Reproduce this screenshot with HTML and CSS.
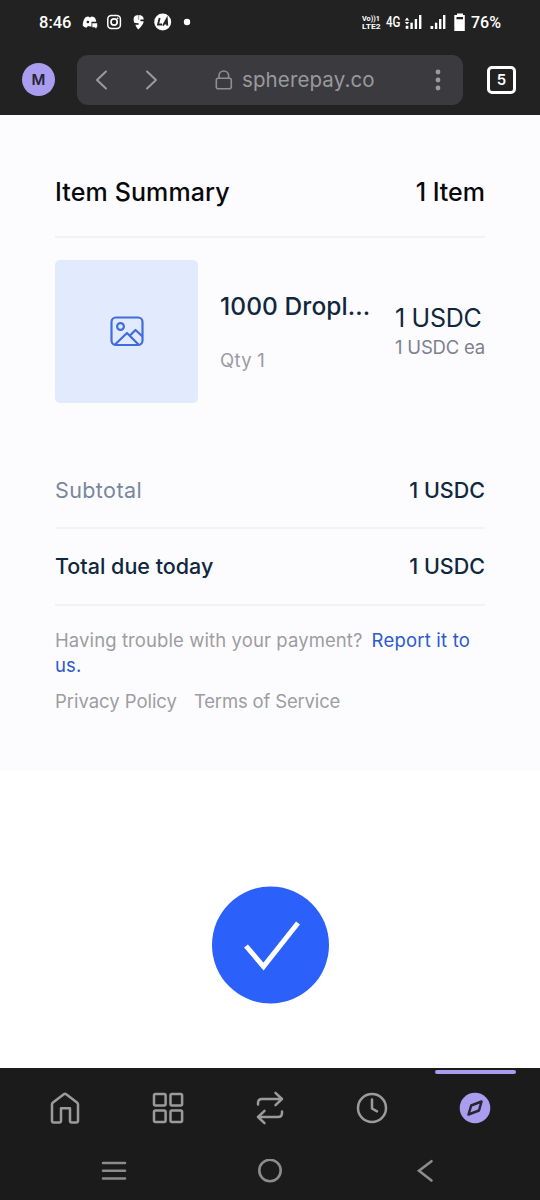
FILE: index.html
```html
<!DOCTYPE html>
<html lang="en">
<head>
<meta charset="utf-8">
<title>Item Summary</title>
<link rel="stylesheet" href="styles.css">
</head>
<body>
<header class="chrome">
  <div class="status">
    <span class="time">8:46</span>
    <svg class="notices" width="112" height="20" viewBox="82 12 112 20">
      <path fill="#fff" d="M85.500 17.200q2-1 3-.7l.6.7h1.600l.6-.7q2 0 3.300 1 1.300 1.500 1.700 4.300H91.500v4.800h-1.800l-.4-.6-1.600.2-1.300 1.500q-2.300-.500-3.700-2.200.300-5.800 2.800-8.300z"/>
      <circle cx="87.900" cy="22" r="1.300" fill="#222"/>
      <path fill="#fff" d="M92.300 23.300h4.900v3.900h-.9v1.600l-1.700-1.600h-2.300z"/>
      <rect x="107.800" y="15.600" width="12.600" height="12.800" rx="3.500" fill="none" stroke="#fff" stroke-width="1.500"/>
      <circle cx="114.100" cy="22" r="3.100" fill="none" stroke="#fff" stroke-width="1.700"/><circle cx="117.600" cy="18.300" r=".9" fill="#fff"/>
      <path fill="#fff" d="M138.300 29.600q-1.600-1.600-3-4.800h3.300v-1.600q-3.600 0-4.600-.8-2.200-7.200 4.500-7.500 5.200.2 5.200 4.500h-3.300v1.800h3.200q.2 3-5.300 8.400z"/><path d="M138.700 15v4.700" stroke="#222" fill="none" stroke-width=".5"/>
      <circle cx="162.700" cy="22" r="8.500" fill="#fff"/>
      <path fill="none" stroke="#222" stroke-width="1.800" d="M159.700 18l-1.700 6.500h4M163 25.600l3.800-6.800.5 6.800M164.500 23.500h2.500"/>
      <circle cx="187" cy="22" r="3.200" fill="#fff"/>
    </svg>
    <svg class="radio" width="106" height="24" viewBox="361 10 106 24">
      <g class="tiny"><text x="362" y="20.700" textLength="18" lengthAdjust="spacingAndGlyphs">Vo))1</text><text x="362" y="28.900" textLength="18.500" lengthAdjust="spacingAndGlyphs">LTE2</text></g>
      <text class="network" x="386" y="27" textLength="14.500" lengthAdjust="spacingAndGlyphs">4G</text>
      <g fill="#fff"><path d="M404.800 20.500l2.200-3 2.200 3zM404.800 22h4.400L407 24.500z"/><rect x="405.700" y="25.800" width="2.700" height="3"/><rect x="410.400" y="22.700" width="2.400" height="6.300"/><rect x="414.700" y="19" width="2.400" height="10"/><rect x="419" y="15" width="2.400" height="14"/>
      <rect x="430.500" y="26" width="2.700" height="3"/><rect x="434.900" y="22.700" width="2.400" height="6.300"/><rect x="439" y="19" width="2.400" height="10"/><rect x="443" y="15" width="2.400" height="14"/>
      <path d="M457 13.500h6V15h1.800v16H454.300V15H457z"/></g><rect x="456.500" y="17" width="6.500" height="2.300" fill="#222"/>
    </svg>
    <span class="battery">76%</span>
  </div>
  <div class="toolbar">
    <div class="avatar">M</div>
    <div class="address">
      <svg width="74" height="24" viewBox="90 68 74 24" fill="none" stroke="#9b9b9d" stroke-width="2" stroke-linecap="round" stroke-linejoin="round"><path d="M106 71.500L97 80l9 8.500M147 71.500l9 8.500-9 8.500"/></svg>
      <div class="site"><svg width="18" height="20" viewBox="0 0 18 20" fill="none" stroke="#8f8f92" stroke-width="1.600"><rect x="1.300" y="8.300" width="15" height="10.500" rx="2"/><path d="M4 8V5.800a4.800 4.800 0 0 1 9.600 0V8"/></svg><span>spherepay.co</span></div>
      <svg class="more" width="6" height="22" viewBox="0 0 6 22" fill="#9b9b9d"><circle cx="3" cy="3" r="2.400"/><circle cx="3" cy="11" r="2.400"/><circle cx="3" cy="19" r="2.400"/></svg>
    </div>
    <div class="tabs">5</div>
  </div>
</header>
<main>
  <section class="summary">
    <div class="heading"><h1>Item Summary</h1><span class="count">1 Item</span></div>
    <div class="product">
      <div class="thumb"><svg width="34" height="32" viewBox="0 0 34 32" fill="none" stroke="#416cdf" stroke-width="2.200" stroke-linejoin="round"><rect x="1.500" y="1.500" width="31" height="27.500" rx="4.500"/><circle cx="10.500" cy="10.500" r="3.400"/><path d="M5 28.500l12-11.500 11.500 11.500M20 19.500l5.500-5.500 7 6.500"/></svg></div>
      <div class="details"><div class="name">1000 Dropl...</div><div class="qty">Qty 1</div></div>
      <div class="price"><div class="amount">1 USDC</div><div class="each">1 USDC ea</div></div>
    </div>
    <div class="row subtotal"><span class="label">Subtotal</span><span class="value">1 USDC</span></div>
    <div class="row total"><span class="label">Total due today</span><span class="value">1 USDC</span></div>
    <p class="help"><span class="question">Having trouble with your payment?</span><a class="report">Report it to</a><br><a class="us">us.</a></p>
    <div class="legal"><a class="privacy">Privacy Policy</a><a class="terms">Terms of Service</a></div>
  </section>
  <section class="success"><svg width="118" height="118" viewBox="0 0 118 118"><circle cx="59.500" cy="59" r="58.500" fill="#2b61fa"/><path d="M35 60L52.500 80.500 87 37" fill="none" stroke="#fff" stroke-width="5"/></svg></section>
</main>
<footer>
  <nav class="tabbar">
    <a><svg width="32" height="34" viewBox="0 0 32 34"><path d="M4.800 31.500Q3 31.500 3 29.700V13.500q0-1.200 1-2L14.800 3.300q1.200-.9 2.400 0L28 11.500q1 .8 1 2v16.200q0 1.800-1.800 1.800h-4.400q-1.800 0-1.800-1.800V17.200h-9v12.500q0 1.800-1.800 1.800z"/></svg></a>
    <a><svg width="32" height="34" viewBox="0 0 32 34"><rect x="2" y="3" width="11.600" height="11.600" rx="1.500"/><rect x="18.500" y="3" width="11.600" height="11.600" rx="1.500"/><rect x="2" y="19.500" width="11.600" height="11.600" rx="1.500"/><rect x="18.500" y="19.500" width="11.600" height="11.600" rx="1.500"/></svg></a>
    <a><svg width="32" height="34" viewBox="0 0 32 34"><path d="M4 13.500V12q0-4 4-4h20M21.500 1.800L28 8l-6.500 6.200M28 20.500V22q0 4-4 4H4M10.500 19.800L4 26l6.500 6.200"/></svg></a>
    <a><svg width="32" height="34" viewBox="0 0 32 34"><circle cx="16" cy="17" r="14"/><path d="M16 8.500v9l5 2.800"/></svg></a>
    <a class="current"><svg width="32" height="34" viewBox="0 0 32 34"><circle class="disc" cx="16" cy="17" r="15.300"/><path class="needle" d="M22.500 10.500l-2.500 9-10.500 4 2.700-9z"/></svg></a>
  </nav>
  <div class="system">
    <svg width="26" height="24" viewBox="0 0 26 24"><path d="M2 4h22M2 11.800h22M2 19.500h22"/></svg>
    <svg width="26" height="24" viewBox="0 0 26 24"><circle cx="13" cy="11.500" r="10.700"/></svg>
    <svg width="26" height="24" viewBox="0 0 26 24"><path d="M18.500 2.200L6 11.800l12.500 9.700"/></svg>
  </div>
</footer>
</body>
</html>
```

FILE: styles.css
```css
* { box-sizing: border-box; }
body { margin: 0; width: 540px; height: 1200px; overflow: hidden; background: #fff; font-family: Inter, sans-serif; display: flex; flex-direction: column; }
svg { display: block; flex: none; }
span, a, h1, .name, .amount, .each, .qty { white-space: nowrap; }
.chrome { height: 115px; flex: none; background: #222; color: #fff; }
.status { height: 44px; display: flex; align-items: center; padding-left: 39px; font-family: Roboto, sans-serif; font-weight: 500; font-size: 16.500px; }
.time { width: 43px; }
.radio { margin-left: 167px; fill: #fff; }
.tiny { font: 700 7px Roboto, sans-serif; }
.network { font: 500 15px Roboto, sans-serif; }
.battery { margin-left: 4px; font-size: 16px; }
.toolbar { height: 71px; display: flex; align-items: center; padding: 0 24px 0 22px; }
.avatar { width: 33px; height: 33px; border-radius: 50%; background: #aa9df0; color: #252332; display: grid; place-items: center; font-size: 15px; font-weight: 600; }
.address { width: 386px; height: 50px; margin-left: 22px; background: #3b3b3f; border-radius: 11px; display: flex; align-items: center; padding-left: 13px; }
.site { margin-left: 51px; width: 218px; display: flex; align-items: center; gap: 9px; color: #99999c; font-size: 20.500px; letter-spacing: .12px; }
.more { margin-left: 2px; }
.tabs { margin-left: 24px; width: 29px; height: 28px; border: 3px solid #fff; border-radius: 5px; display: grid; place-items: center; font-size: 15px; font-weight: 600; }
main { height: 953px; flex: none; }
.summary { height: 655px; background: #fcfcfe; padding: 32px 55px 0; }
.heading { height: 91px; display: flex; justify-content: space-between; align-items: center; border-bottom: 2px solid #f0f2f5; color: #08080d; font-size: 25px; font-weight: 500; }
h1 { margin: 0; font: inherit; letter-spacing: .13px; }
.product { height: 187px; padding-top: 22px; display: flex; }
.thumb { flex: none; width: 143px; height: 143px; border-radius: 5px; background: #e2eafd; display: grid; place-items: center; }
.details { flex: none; width: 175px; padding: 30px 0 0 22px; }
.name { color: #10273d; font-size: 24.500px; font-weight: 500; line-height: 32px; letter-spacing: .08px; }
.qty { margin-top: 26px; color: #9b9b9f; font-size: 18.500px; line-height: 24px; letter-spacing: .3px; }
.price { flex: none; padding: 42px 0 0 22px; }
.amount { color: #10273d; font-size: 25px; line-height: 32px; letter-spacing: -.3px; }
.each { color: #7e7f90; font-size: 18.500px; line-height: 27px; letter-spacing: -.2px; }
.row { display: flex; justify-content: space-between; align-items: center; height: 77px; padding-bottom: 1px; border-bottom: 2px solid #f0f2f5; font-size: 21.500px; color: #10273d; font-weight: 500; }
.subtotal { height: 104px; padding-top: 28px; }
.subtotal .label { color: #7986a0; font-weight: 400; letter-spacing: .4px; }
.help { margin: 22px 0 0; font-size: 18.500px; line-height: 25px; color: #9d9da1; letter-spacing: .1px; }
.report { margin-left: 9px; letter-spacing: .2px; }
.report, .us { color: #2c59ce; }
.legal { margin-top: 11px; display: flex; font-size: 18.500px; line-height: 25px; color: #9d9da1; }
.privacy { letter-spacing: -.04px; }
.terms { margin-left: 17px; letter-spacing: -.17px; }
.success { height: 298px; display: grid; justify-items: center; padding-top: 116px; }
footer { height: 132px; background: #1b1b1b; flex: none; }
.tabbar { height: 79px; display: flex; padding: 0 14px; }
.tabbar a { width: 102.500px; height: 79px; display: grid; place-items: center; position: relative; }
.tabbar svg { fill: none; stroke: #9b9b9b; stroke-width: 2.500; stroke-linecap: round; stroke-linejoin: round; }
.current::before { content: ""; position: absolute; top: 2px; left: 11px; width: 81px; height: 4px; border-radius: 2px; background: #aa9df0; }
.tabbar .disc { fill: #aa9df0; stroke: none; }
.tabbar .needle { stroke: #292632; }
.system { display: flex; justify-content: space-between; padding: 12px 101px 0; }
.system svg { fill: none; stroke: #8c8c8c; stroke-width: 2.600; stroke-linecap: round; }
```
